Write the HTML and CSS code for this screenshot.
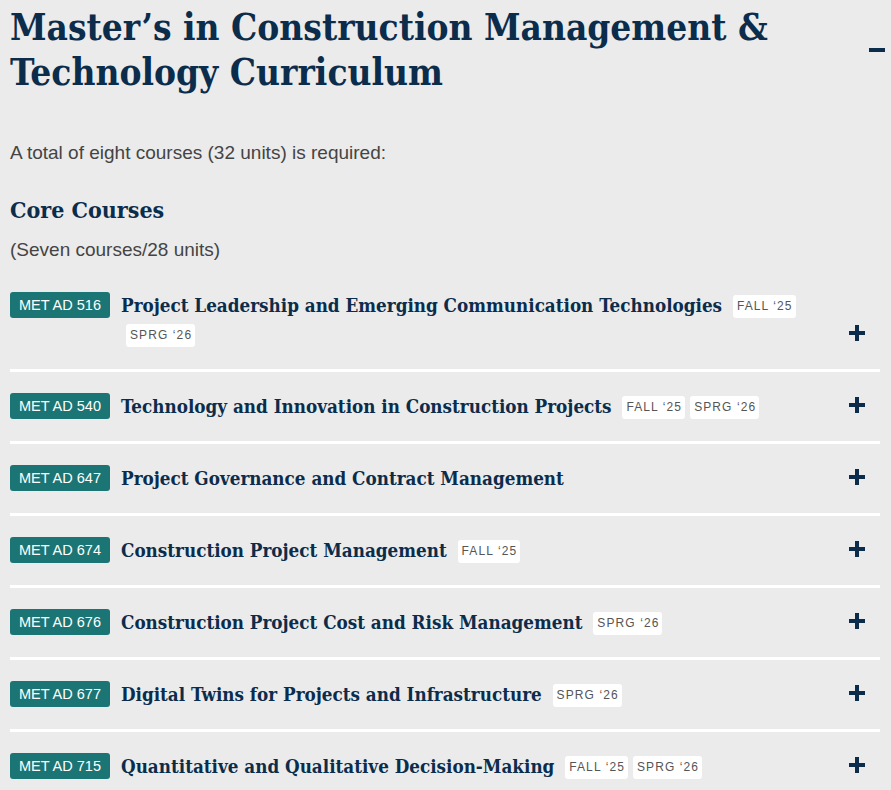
FILE: index.html
```html
<!DOCTYPE html>
<html lang="en">
<head>
    <meta charset="UTF-8">
    <title>Construction Management &amp; Technology Curriculum</title>
    <link rel="stylesheet" href="styles.css">
</head>
<body>
    <section class="curriculum">
        <header class="curriculum-head">
            <h2>Master’s in Construction Management &amp; Technology Curriculum</h2>
            <button class="toggle" type="button" aria-label="Collapse">
                <svg width="16" height="16" viewBox="0 0 16 16"><rect x="0" y="6" width="16" height="4" fill="currentColor"/></svg>
            </button>
        </header>

        <p class="intro">A total of eight courses (32 units) is required:</p>

        <h3 class="group-title">Core Courses</h3>
        <p class="group-note">(Seven courses/28 units)</p>

        <ul class="courses">
            <li class="course">
                <span class="code">MET AD 516</span>
                <h4 class="course-title">Project Leadership and Emerging Communication Technologies <span class="term">FALL ‘25</span><span class="term">SPRG ‘26</span></h4>
                <svg class="plus" width="16" height="16" viewBox="0 0 16 16"><path d="M6 0h4v6h6v4h-6v6H6v-6H0V6h6z" fill="currentColor"/></svg>
            </li>
            <li class="course">
                <span class="code">MET AD 540</span>
                <h4 class="course-title">Technology and Innovation in Construction Projects <span class="term">FALL ‘25</span><span class="term">SPRG ‘26</span></h4>
                <svg class="plus" width="16" height="16" viewBox="0 0 16 16"><path d="M6 0h4v6h6v4h-6v6H6v-6H0V6h6z" fill="currentColor"/></svg>
            </li>
            <li class="course">
                <span class="code">MET AD 647</span>
                <h4 class="course-title">Project Governance and Contract Management</h4>
                <svg class="plus" width="16" height="16" viewBox="0 0 16 16"><path d="M6 0h4v6h6v4h-6v6H6v-6H0V6h6z" fill="currentColor"/></svg>
            </li>
            <li class="course">
                <span class="code">MET AD 674</span>
                <h4 class="course-title">Construction Project Management <span class="term">FALL ‘25</span></h4>
                <svg class="plus" width="16" height="16" viewBox="0 0 16 16"><path d="M6 0h4v6h6v4h-6v6H6v-6H0V6h6z" fill="currentColor"/></svg>
            </li>
            <li class="course">
                <span class="code">MET AD 676</span>
                <h4 class="course-title">Construction Project Cost and Risk Management <span class="term">SPRG ‘26</span></h4>
                <svg class="plus" width="16" height="16" viewBox="0 0 16 16"><path d="M6 0h4v6h6v4h-6v6H6v-6H0V6h6z" fill="currentColor"/></svg>
            </li>
            <li class="course">
                <span class="code">MET AD 677</span>
                <h4 class="course-title">Digital Twins for Projects and Infrastructure <span class="term">SPRG ‘26</span></h4>
                <svg class="plus" width="16" height="16" viewBox="0 0 16 16"><path d="M6 0h4v6h6v4h-6v6H6v-6H0V6h6z" fill="currentColor"/></svg>
            </li>
            <li class="course">
                <span class="code">MET AD 715</span>
                <h4 class="course-title">Quantitative and Qualitative Decision-Making <span class="term">FALL ‘25</span><span class="term">SPRG ‘26</span></h4>
                <svg class="plus" width="16" height="16" viewBox="0 0 16 16"><path d="M6 0h4v6h6v4h-6v6H6v-6H0V6h6z" fill="currentColor"/></svg>
            </li>
        </ul>
    </section>
</body>
</html>
```

FILE: styles.css
```css
body {
    background-color: #ebebeb;
    color: #444;
    font-family: 'Liberation Sans', Arial, sans-serif;
    margin: 0;
    padding: 0;
}

.curriculum {
    padding: 5px 6px 0 10px;
}

.curriculum-head {
    display: flex;
    align-items: center;
    justify-content: space-between;
}

.curriculum-head h2 {
    margin: 0;
    color: #0b2d4b;
    font-family: 'DejaVu Serif Condensed', 'DejaVu Serif', serif;
    font-stretch: condensed;
    font-weight: 700;
    font-size: 36.7px;
    line-height: 45px;
}

.toggle {
    background: none;
    border: none;
    padding: 0;
    color: #0b2d4b;
    display: flex;
    cursor: pointer;
}

.intro {
    margin: 44px 0 0;
    font-size: 19px;
    line-height: 28px;
}

.group-title {
    margin: 28px 0 0;
    color: #0b2d4b;
    font-family: 'DejaVu Serif Condensed', 'DejaVu Serif', serif;
    font-stretch: condensed;
    font-weight: 700;
    font-size: 23px;
    line-height: 30px;
}

.group-note {
    margin: 11px 0 0;
    font-size: 19px;
    line-height: 28px;
}

.courses {
    list-style: none;
    margin: 7px 0 0;
    padding: 0;
    width: 870px;
}

.course {
    display: flex;
    align-items: last baseline;
    padding: 20px 15px 20px 0;
    border-bottom: 3px solid #fff;
}

.code {
    flex: none;
    align-self: flex-start;
    width: 100px;
    height: 26px;
    margin: 1px 11px 0 0;
    border-radius: 3px;
    background-color: #1b7575;
    color: #fff;
    font-size: 14.5px;
    line-height: 26px;
    text-align: center;
}

.course-title {
    flex: 1;
    margin: 0;
    color: #0b2d4b;
    font-family: 'DejaVu Serif Condensed', 'DejaVu Serif', serif;
    font-stretch: condensed;
    font-weight: 700;
    font-size: 18.7px;
    line-height: 29px;
}

.term {
    display: inline-block;
    vertical-align: 2px;
    margin-left: 5px;
    padding: 0 3px 0 4px;
    height: 23px;
    border-radius: 3px;
    background-color: #fff;
    color: #555;
    font-family: 'Liberation Sans', Arial, sans-serif;
    font-stretch: normal;
    font-weight: 400;
    font-size: 12px;
    letter-spacing: 1.1px;
    line-height: 23px;
}

.plus {
    flex: none;
    color: #0b2d4b;
    margin-left: 20px;
}
```
